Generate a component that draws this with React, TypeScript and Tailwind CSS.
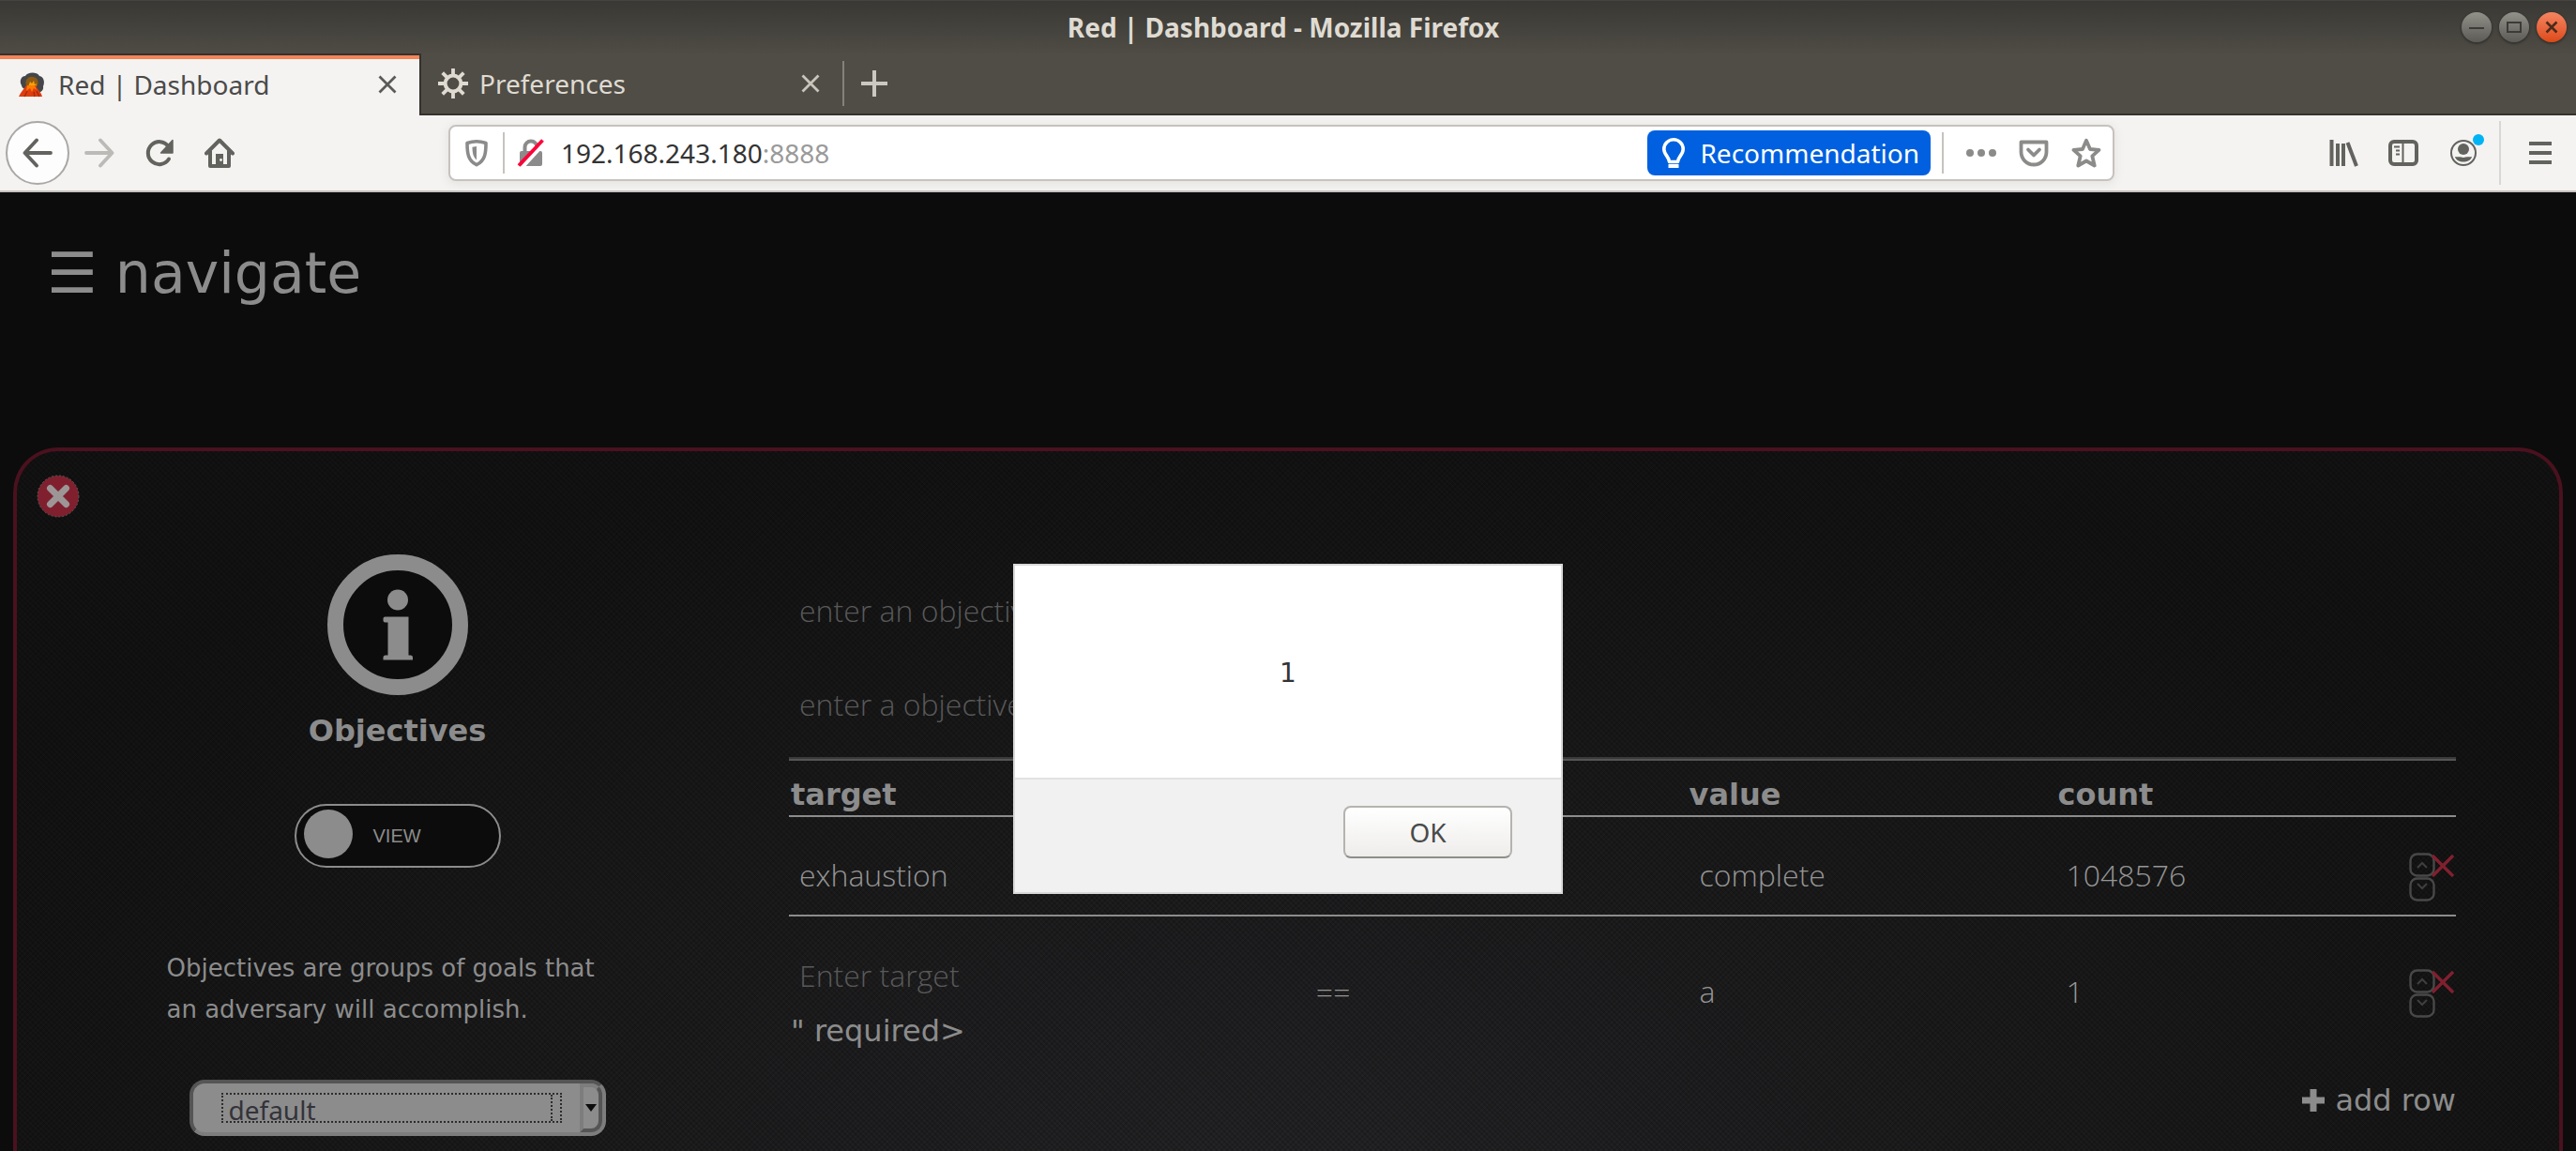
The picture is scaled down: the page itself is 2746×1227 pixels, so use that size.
import React from "react";

type IconProps = { className?: string };

function CrossIcon({ className = "" }: IconProps) {
  return (
    <svg viewBox="0 0 20 20" className={"h-5 w-5 " + className} fill="none" stroke="currentColor" strokeWidth="2.8" aria-hidden="true">
      <path d="M1.5 1.5 18.5 18.5M18.5 1.5 1.5 18.5" />
    </svg>
  );
}

function VolcanoIcon() {
  return (
    <svg viewBox="0 0 32 28" className="h-7 w-8 shrink-0" aria-hidden="true">
      <path d="M5 15c-3-5 0-10 4-10 2-4 12-5 15 0 5 1 6 7 4 11 1 5-4 8-8 6l-10-3c-3 0-5-2-5-4z" fill="#454649" />
      <path d="M10 15c-2-5 2-10 7-9 4 0 7 4 5 9l-2 2h-8z" fill="#8f5a12" />
      <path d="M13 14l1-3 2 2 2-3 1 4 2-1-1 4h-8z" fill="#f5a30b" />
      <path d="M2 27c2-5 5-7 8-12h10c2 5 6 7 7 12z" fill="#dd3d10" />
      <path d="M11 15h8l2 5-3-2-2 4-2-4-4 3z" fill="#ff7a00" />
      <path d="M8 27l3-6M19 27l-1-5M24 27l-3-6" stroke="#a72c0c" strokeWidth="1.5" />
    </svg>
  );
}

function GearIcon() {
  return (
    <svg viewBox="0 0 32 32" className="h-8 w-8 shrink-0" fill="none" stroke="#dfdbd2" aria-hidden="true">
      <circle cx="16" cy="16" r="8.4" strokeWidth="4" />
      <path
        d="M16 0v7M16 25v7M0 16h7M25 16h7M4.7 4.7l5 5M22.3 22.3l5 5M27.3 4.7l-5 5M9.7 22.3l-5 5"
        strokeWidth="3.8"
      />
    </svg>
  );
}

function ArrowIcon({ flip = false }: { flip?: boolean }) {
  return (
    <svg viewBox="0 0 32 32" className={flip ? "h-8 w-8 rotate-180" : "h-8 w-8"} fill="none" stroke="currentColor" strokeWidth="3.8" strokeLinecap="round" strokeLinejoin="round" aria-hidden="true">
      <path d="M15 2.5 2.5 16 15 29.5M3 16h27" />
    </svg>
  );
}

function ReloadIcon() {
  return (
    <svg viewBox="0 0 32 32" className="h-8 w-8" aria-hidden="true">
      <path d="M26 22.5A12 12 0 1 1 25.5 9" fill="none" stroke="currentColor" strokeWidth="4" strokeLinecap="round" />
      <path d="M30 2.5v13.5H17.500z" fill="currentColor" stroke="currentColor" strokeWidth="1.5" strokeLinejoin="round" />
    </svg>
  );
}

function HomeIcon() {
  return (
    <svg viewBox="0 0 32 32" className="h-8 w-8" aria-hidden="true">
      <path d="M2 16.5 16 2.500l14 14M6 14v16h20V14" fill="none" stroke="currentColor" strokeWidth="4" strokeLinecap="round" strokeLinejoin="round" />
      <path d="M12 30V17h8v13z" fill="currentColor" />
      <circle cx="17.5" cy="23.5" r="1.4" fill="#f4f3f1" />
    </svg>
  );
}

function ShieldIcon() {
  return (
    <svg viewBox="0 0 32 32" className="h-8 w-8" aria-hidden="true">
      <path d="M16 3.800c4 0 7 .7 10 1.700 0 11-1 19-10 23.200C7 24.500 6 16.500 6 5.500c3-1 6-1.700 10-1.700z" fill="none" stroke="#8b8b8b" strokeWidth="3.6" strokeLinejoin="round" />
      <path d="M16 9v14.500c-3.500-2.800-4.500-7.500-4.500-13.700z" fill="#8b8b8b" />
    </svg>
  );
}

function LockIcon() {
  return (
    <svg viewBox="0 0 32 32" className="h-8 w-8" aria-hidden="true">
      <path d="M9.500 15V10a6.500 6.500 0 0 1 13 0v5" fill="none" stroke="#8b8b8b" strokeWidth="4" />
      <rect x="4" y="14" width="24" height="16" rx="2" fill="#8b8b8b" />
      <path d="M7 31 31 5" stroke="#ffffff" strokeWidth="4" />
      <path d="M3 29.500 28.500 2.500" stroke="#ff0039" strokeWidth="3.8" />
    </svg>
  );
}

function BulbIcon() {
  return (
    <svg viewBox="0 0 32 32" className="h-8 w-8" aria-hidden="true">
      <path d="M11.500 25.500c0-5-5.700-7.500-5.700-13.500a10.200 10.200 0 0 1 20.400 0c0 6-5.700 8.500-5.700 13.500z" fill="none" stroke="#ffffff" strokeWidth="3.6" strokeLinejoin="round" />
      <rect x="10.5" y="28" width="11" height="4" fill="#ffffff" />
    </svg>
  );
}

function PocketIcon() {
  return (
    <svg viewBox="0 0 32 32" className="h-8 w-8" fill="none" stroke="currentColor" strokeWidth="3.8" strokeLinecap="round" strokeLinejoin="round" aria-hidden="true">
      <path d="M2.500 4.500h27V15a13.500 13.500 0 0 1-27 0z" />
      <path d="M10 12.500l6 6 6-6" />
    </svg>
  );
}

function StarIcon() {
  return (
    <svg viewBox="0 0 32 32" className="h-8 w-8" fill="none" stroke="currentColor" strokeWidth="3.8" strokeLinejoin="round" aria-hidden="true">
      <path d="M16 2.800l4 9.200 9.500.8-7.200 6.500 2.400 10.200L16 24.500l-8.700 5 2.400-10.200L2.500 12.800 12 12z" />
    </svg>
  );
}

function LibraryIcon() {
  return (
    <svg viewBox="0 0 32 32" className="h-8 w-8" stroke="currentColor" strokeWidth="4" aria-hidden="true">
      <path d="M3.500 2v28M10 6v24M16 6v24" />
      <path d="M20.500 5 30 30" />
    </svg>
  );
}

function SidebarIcon() {
  return (
    <svg viewBox="0 0 32 32" className="h-8 w-8" fill="none" stroke="currentColor" aria-hidden="true">
      <rect x="2" y="4" width="28" height="24" rx="4" strokeWidth="4" />
      <path d="M15.500 4v24M6 9.500h6M8 13.500h4M8 17.500h4" strokeWidth="2" />
    </svg>
  );
}

function AccountIcon() {
  return (
    <svg viewBox="0 0 40 40" className="h-10 w-10" aria-hidden="true">
      <circle cx="18" cy="20" r="13" fill="none" stroke="currentColor" strokeWidth="2" />
      <circle cx="18" cy="16" r="6" fill="currentColor" />
      <path d="M9 24c3 1 5-.500 9 1 4-1.500 6 0 9-1-1 4-5 5.500-9 5.500S10 28 9 24z" fill="currentColor" />
      <circle cx="34" cy="6" r="6" fill="#00b3f4" />
    </svg>
  );
}

function WindowButton({ label, close = false, children }: { label: string; close?: boolean; children: React.ReactNode }) {
  return (
    <button
      aria-label={label}
      className={
        close
          ? "h-8 w-8 rounded-full bg-linear-to-b from-[#f58560] to-[#dd4814] text-[#4a2b1a] shadow-[0_1px_2px_1px_#35342f]"
          : "h-8 w-8 rounded-full bg-linear-to-b from-[#92918a] to-[#5c5b55] text-[#3c3b37] shadow-[0_1px_2px_1px_#35342f]"
      }
    >
      <svg viewBox="0 0 32 32" className="h-8 w-8" fill="none" stroke="currentColor" strokeWidth="2" aria-hidden="true">
        {children}
      </svg>
    </button>
  );
}

function TitleBar() {
  return (
    <div className="grid h-[57px] grid-cols-[1fr_auto_1fr] items-center border-t border-[#45443f] bg-linear-to-b from-[#393834] to-[#4f4c45] pr-2.5">
      <span />
      <h1 className="text-[28px] leading-10 font-bold text-[#dfdbd2]">Red | Dashboard - Mozilla Firefox</h1>
      <div className="flex justify-end gap-2">
        <WindowButton label="Minimize">
          <path d="M8 17h16" />
        </WindowButton>
        <WindowButton label="Maximize">
          <rect x="9" y="11" width="14" height="10" />
        </WindowButton>
        <WindowButton label="Close window" close>
          <path d="M10.500 10.500l11 11M21.500 10.500l-11 11" strokeWidth="2.6" />
        </WindowButton>
      </div>
    </div>
  );
}

function TabBar() {
  return (
    <div className="flex h-[66px] bg-[#504d46]">
      <div className="flex w-[449px] items-center border-t-2 border-r-2 border-[#35322e] bg-[#f4f3f1]">
        <div className="flex h-full w-full items-center border-t-4 border-[#f58457] pr-6 pb-1.5 pl-[18px] text-[#4a4a4a]">
          <VolcanoIcon />
          <span className="ml-3 flex-1 text-[28px] leading-10 whitespace-nowrap">Red | Dashboard</span>
          <button aria-label="Close tab" className="text-[#5a5a58]">
            <CrossIcon />
          </button>
        </div>
      </div>
      <div className="flex flex-1 items-center border-b-2 border-[#35322e] text-[#dfdbd2]">
        <div className="flex h-12 w-[451px] items-center border-r-2 border-[#85827b] pr-6 pl-[18px]">
          <GearIcon />
          <span className="ml-3 flex-1 text-[28px] leading-10">Preferences</span>
          <button aria-label="Close tab" className="text-[#c9c5bd]">
            <CrossIcon />
          </button>
        </div>
        <button aria-label="New tab" className="ml-[18px] text-[#cbc8c1]">
          <svg viewBox="0 0 28 28" className="h-7 w-7" stroke="currentColor" strokeWidth="4" aria-hidden="true">
            <path d="M14 0v28M0 14h28" />
          </svg>
        </button>
      </div>
    </div>
  );
}

function NavBar() {
  return (
    <div className="flex h-[82px] items-center border-b-2 border-[#c6c2be] bg-[#f4f3f1] pr-[26px] pl-1.5 text-[#62625f]">
      <div className="flex items-center gap-8">
        <button aria-label="Back" className="-mr-4 flex h-[68px] w-[68px] items-center justify-center rounded-full border-2 border-[#aaa8a6] bg-[#fdfdfd]">
          <ArrowIcon />
        </button>
        <button aria-label="Forward" className="text-[#bbbab7]">
          <ArrowIcon flip />
        </button>
        <button aria-label="Reload">
          <ReloadIcon />
        </button>
        <button aria-label="Home">
          <HomeIcon />
        </button>
      </div>

      <div className="mx-[228px] flex h-[60px] flex-1 items-center rounded-lg border-2 border-[#c6c2be] bg-white pr-3 pl-3 shadow-[0_2px_8px_2px_#e6e5e3]">
        <ShieldIcon />
        <span className="mx-3 h-11 w-0.5 bg-[#c6c2be]" />
        <LockIcon />
        <div className="ml-4 flex-1 text-[28px] leading-10">
          <a href="#address" className="text-[#333333]">
            192.168.243.180<span className="text-[#9a9a9a]">:8888</span>
          </a>
        </div>
        <button className="flex h-12 items-center rounded-lg bg-[#0060df] pr-3 pl-3 text-[28px] leading-10 text-white">
          <BulbIcon />
          <span className="ml-3">Recommendation</span>
        </button>
        <span className="mr-6 ml-3 h-11 w-0.5 bg-[#c6c2be]" />
        <div className="flex gap-6 text-[#8b8b89]">
          <button aria-label="Page actions">
            <svg viewBox="0 0 32 32" className="h-8 w-8" fill="currentColor" aria-hidden="true">
              <circle cx="4" cy="16" r="4" />
              <circle cx="16" cy="16" r="4" />
              <circle cx="28" cy="16" r="4" />
            </svg>
          </button>
          <button aria-label="Save to Pocket">
            <PocketIcon />
          </button>
          <button aria-label="Bookmark">
            <StarIcon />
          </button>
        </div>
      </div>

      <div className="flex items-center">
        <button aria-label="Library">
          <LibraryIcon />
        </button>
        <button aria-label="Sidebars" className="ml-8">
          <SidebarIcon />
        </button>
        <button aria-label="Account" className="ml-[30px]">
          <AccountIcon />
        </button>
        <span className="mr-[30px] ml-4 h-[68px] w-0.5 bg-[#d9d7d4]" />
        <button aria-label="Menu">
          <svg viewBox="0 0 24 24" className="h-6 w-6" stroke="currentColor" strokeWidth="4" aria-hidden="true">
            <path d="M0 2h24M0 12h24M0 22h24" />
          </svg>
        </button>
      </div>
    </div>
  );
}

function ObjectivesSummary() {
  return (
    <section className="flex w-[30%] flex-col items-center pt-[110px] pr-0.5">
      <svg viewBox="0 0 150 150" className="h-[150px] w-[150px]" aria-hidden="true">
        <circle cx="75" cy="75" r="66.5" fill="#0c0c0c" stroke="#8c8c8c" strokeWidth="17" />
        <circle cx="75" cy="48.5" r="11" fill="#8c8c8c" />
        <path d="M61.500 66.500h25v41h2a2.500 2.500 0 0 1 2.500 2.500v2.500H59.500V110a2.500 2.500 0 0 1 2.500-2.500h2.500v-35h-3a2 2 0 0 1-2-2v-2a2 2 0 0 1 2-2z" fill="#8c8c8c" />
      </svg>
      <h2 className="mt-[18px] text-[32px] leading-10 font-bold">Objectives</h2>
      <button role="switch" aria-checked="false" className="mt-[58px] flex h-[68px] w-[220px] items-center rounded-full border-2 border-[#8c8c8c] bg-[#0c0c0c] pl-2">
        <span className="-mt-1 h-[52px] w-[52px] rounded-full bg-[#8c8c8c]" />
        <span className='ml-[22px] font-["Liberation_Sans",sans-serif] text-[20px] leading-6'>VIEW</span>
      </button>
      <p className="mt-[85px] w-[492px] text-[26px] leading-[44px]">Objectives are groups of goals that an adversary will accomplish.</p>
      <div className="relative mt-[53px] h-[60px] w-[444px]">
        <select
          aria-label="Objective"
          defaultValue="default"
          className='h-full w-full appearance-none rounded-2xl border-4 border-t-[#555555] border-r-[#7d7d7d] border-b-[#7d7d7d] border-l-[#555555] bg-[#8c8c8c] pt-1 pl-[38px] font-["Noto_Sans",sans-serif] text-[28px] leading-10 text-[#33333a]'
        >
          <option value="default">default</option>
        </select>
        <span className="pointer-events-none absolute top-3.5 left-[34px] flex h-8 w-[363px] justify-end border-2 border-dotted border-[#2c2c2c]">
          <span className="mr-2 h-full border-r-2 border-dotted border-[#2c2c2c]" />
        </span>
        <span className="pointer-events-none absolute top-1 right-1 flex h-[52px] w-6 items-center justify-center rounded-r-xl border-4 border-t-[#7d7d7d] border-r-[#555555] border-b-[#555555] border-l-[#7d7d7d] bg-[#8c8c8c]">
          <svg viewBox="0 0 12 8" className="h-2 w-3 shrink-0" aria-hidden="true">
            <path d="M0 0h12L6 8z" fill="#0c0c0c" />
          </svg>
        </span>
      </div>
    </section>
  );
}

const fieldClass =
  'block w-full bg-transparent pb-1 pl-[11px] font-["Open_Sans",sans-serif] text-[32px] leading-10 font-light text-[#959595] outline-none placeholder:text-[#595959]';

function RowActions() {
  return (
    <div className="flex h-20 items-center justify-end pr-0.5">
      <div className="flex items-center">
        <div className="flex flex-col">
          <button aria-label="Move row up">
            <svg viewBox="0 0 28 26" className="block h-[26px] w-7" fill="none" aria-hidden="true">
              <rect x="1.5" y="1.5" width="25" height="23" rx="7" stroke="#484848" strokeWidth="2.4" />
              <path d="M9 16l5-5 5 5" stroke="#3f3f3f" strokeWidth="2" />
            </svg>
          </button>
          <button aria-label="Move row down">
            <svg viewBox="0 0 28 26" className="block h-[26px] w-7" fill="none" aria-hidden="true">
              <rect x="1.5" y="1.5" width="25" height="23" rx="7" stroke="#484848" strokeWidth="2.4" />
              <path d="M9 7l5 5 5-5" stroke="#3f3f3f" strokeWidth="2" />
            </svg>
          </button>
        </div>
        <button aria-label="Remove row" className="mb-6 -ml-1 text-[#80202f]">
          <svg viewBox="0 0 24 24" className="block h-6 w-6" stroke="currentColor" strokeWidth="3.4" aria-hidden="true">
            <path d="M1 1l22 22M23 1 1 23" />
          </svg>
        </button>
      </div>
    </div>
  );
}

function GoalsTable() {
  return (
    <table className="w-full table-fixed border-collapse text-left">
      <colgroup>
        <col className="w-[31%]" />
        <col className="w-[23%]" />
        <col className="w-[22%]" />
        <col />
        <col className="w-[5%]" />
      </colgroup>
      <thead>
        <tr className="border-b-2 border-[#8c8c8c] text-[32px] leading-10">
          <th className="pt-4 pb-0.5 pl-0.5">target</th>
          <th />
          <th className="pt-4 pb-0.5">value</th>
          <th className="pt-4 pb-0.5 pl-0.5">count</th>
          <th />
        </tr>
      </thead>
      <tbody>
        <tr className="border-b-2 border-[#8c8c8c]">
          <td className="pt-6">
            <input aria-label="Target" defaultValue="exhaustion" className={fieldClass} />
          </td>
          <td />
          <td className="pt-6">
            <input aria-label="Value" defaultValue="complete" className={fieldClass} />
          </td>
          <td className="pt-6">
            <input aria-label="Count" defaultValue="1048576" className={fieldClass} />
          </td>
          <td className="pt-6">
            <RowActions />
          </td>
        </tr>
        <tr>
          <td className="pt-6">
            <input aria-label="Target" placeholder="Enter target" className={"h-20 " + fieldClass} />
            <span className="block pl-0.5 text-[32px] leading-9">" required&gt;</span>
          </td>
          <td className="pt-6">
            <input aria-label="Operator" defaultValue="==" className={fieldClass} />
          </td>
          <td className="pt-6">
            <input aria-label="Value" defaultValue="a" className={fieldClass} />
          </td>
          <td className="pt-6">
            <input aria-label="Count" defaultValue="1" className={fieldClass} />
          </td>
          <td className="pt-6">
            <RowActions />
          </td>
        </tr>
      </tbody>
    </table>
  );
}

function ObjectivesPanel() {
  return (
    <div className="relative mx-3.5 flex min-h-0 flex-1 rounded-t-[48px] border-4 border-b-0 border-[#4a111e] bg-[repeating-linear-gradient(45deg,#00000026_0px_2px,transparent_2px_4px),repeating-linear-gradient(-45deg,#00000020_0px_2px,transparent_2px_4px),radial-gradient(ellipse_60%_110%_at_50%_105%,#252528_0%,#1c1c1d_50%,#131313_100%)]">
      <button aria-label="Close section" className="absolute top-[25px] left-[21px] h-[46px] w-[46px]">
        <svg viewBox="0 0 46 46" className="h-full w-full" aria-hidden="true">
          <circle cx="23" cy="23" r="22" fill="#80202f" stroke="#5a5a5a" strokeWidth="1" strokeDasharray="2 2" />
          <path d="M14.500 14.500l17 17M31.500 14.500l-17 17" stroke="#9c9697" strokeWidth="7" strokeLinecap="round" />
        </svg>
      </button>
      <ObjectivesSummary />
      <section className="w-[70%] pt-[121px] pr-[110px] pl-2.5">
        <input aria-label="Objective name" placeholder="enter an objective name" className={"h-[100px] " + fieldClass} />
        <input aria-label="Objective description" placeholder="enter a objective description" className={"h-[100px] " + fieldClass} />
        <hr className="mt-[5px] border-t-2 border-b-2 border-t-[#3a3a3a] border-b-[#555555]" />
        <GoalsTable />
        <div className="mt-9 flex justify-end">
          <button className="flex items-center gap-2.5 text-[32px] leading-10">
            <svg viewBox="0 0 26 26" className="h-[26px] w-[26px]" aria-hidden="true">
              <path d="M13 1v24M1 13h24" stroke="#8c8c8c" strokeWidth="7" />
            </svg>
            add row
          </button>
        </div>
      </section>
    </div>
  );
}

function AlertDialog() {
  return (
    <div
      role="alertdialog"
      aria-label="Message"
      className="absolute top-[601px] left-1/2 flex w-[586px] -translate-x-1/2 flex-col border-2 border-[#d9d9d9] bg-white text-[#333333]"
    >
      <p className="pt-[95px] pb-[91px] text-center text-[28px] leading-10">1</p>
      <div className="flex justify-end border-t-2 border-[#e2e2e2] bg-[#f1f1f1] px-[52px] pt-7 pb-9">
        <button className='h-14 w-[180px] rounded-lg border-2 border-b-[#8e8e8a] border-[#b4b3af] bg-linear-to-b from-white to-[#eeedeb] font-["Noto_Sans",sans-serif] text-[28px] leading-10 text-[#4a4a4a]'>
          OK
        </button>
      </div>
    </div>
  );
}

export default function App() {
  return (
    <div className='relative flex h-screen flex-col overflow-hidden bg-[#0c0c0c] font-["DejaVu_Sans",sans-serif] text-[#8c8c8c]'>
      <header className='shrink-0 font-["Noto_Sans",sans-serif]'>
        <TitleBar />
        <TabBar />
        <NavBar />
      </header>
      <main className="flex min-h-0 flex-1 flex-col">
        <nav className="px-[50px] pt-12 pb-[148px]">
          <button className="text-[60px] leading-[76px]">☰ navigate</button>
        </nav>
        <ObjectivesPanel />
      </main>
      <AlertDialog />
    </div>
  );
}
